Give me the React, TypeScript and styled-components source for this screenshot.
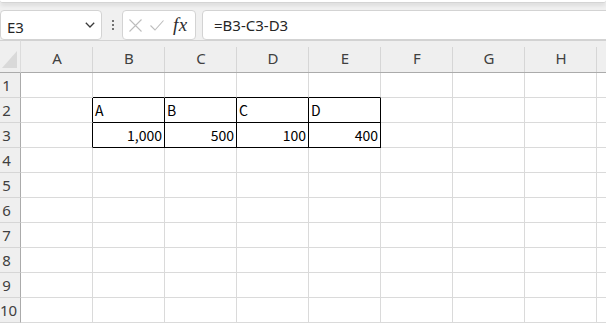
import React from "react";
import styled, { createGlobalStyle } from "styled-components";

const Global = createGlobalStyle`
  html, body { margin: 0; padding: 0; background: #f0f0f0; }
  body { font-family: "Noto Sans", "Noto Sans CJK JP", sans-serif; }
  * { box-sizing: border-box; }
`;

const Window = styled.div`
  width: 606px;
  height: 323px;
  overflow: hidden;
  background: #f0f0f0;
  display: flex;
  flex-direction: column;
`;

const Toolbar = styled.div`
  position: relative;
  height: 40px;
  flex: none;
  display: flex;
  align-items: flex-start;
  padding-top: 10px;
  background: #f0f0f0;
`;

const RibbonEdge = styled.div`
  position: absolute;
  left: 0;
  right: 0;
  top: 0;
  height: 3px;
  background: #ffffff;
  border-bottom: 1px solid #d4d4d4;
  border-radius: 0 0 6px 6px;
  box-shadow: 0 2px 4px rgba(0, 0, 0, 0.12);
`;

const Box = styled.div`
  height: 30px;
  background: #ffffff;
  border: 1px solid #d3d3d3;
  border-radius: 4px;
  display: flex;
  align-items: center;
`;

const NameBox = styled(Box)`
  width: 102px;
  padding: 0 6px 0 6px;
  justify-content: space-between;
`;

const NameText = styled.span`
  font-family: "Noto Sans", sans-serif;
  font-size: 15px;
  color: #262626;
  margin-top: 3px;
`;

const Dots = styled.div`
  width: 20px;
  height: 30px;
  display: flex;
  flex-direction: column;
  align-items: center;
  justify-content: center;
  gap: 2px;
  padding-left: 1px;
`;

const Dot = styled.span`
  width: 2px;
  height: 2px;
  border-radius: 1px;
  background: #4a4a4a;
`;

const ButtonBox = styled(Box)`
  width: 74px;
  padding-left: 5px;
  gap: 0;
`;

const IconSlot = styled.span<{ $w: number }>`
  width: ${(p) => p.$w}px;
  display: flex;
  align-items: center;
  justify-content: center;
`;

const Fx = styled.span`
  font-family: "Liberation Serif", "DejaVu Serif", serif;
  font-style: italic;
  font-size: 19px;
  line-height: 20px;
  color: #2e2e2e;
  letter-spacing: 0.5px;
  margin-left: 1px;
`;

const FormulaBox = styled(Box)`
  flex: 1;
  margin-left: 6px;
  margin-right: -12px;
  padding-left: 11px;
`;

const FormulaText = styled.span`
  font-family: "Noto Sans", sans-serif;
  font-size: 15px;
  color: #262626;
  margin-top: -1px;
`;

const Sheet = styled.div`
  display: grid;
  grid-template-columns: 21px repeat(9, 72px);
  grid-template-rows: 33px repeat(10, 25px);
  background: #ffffff;
`;

const Corner = styled.div`
  background: #efefef;
  border-top: 1px solid #d2d2d2;
  border-bottom: 1px solid #ababab;
  border-right: 1px solid #dcdcdc;
  display: flex;
`;

const ColHeader = styled.div`
  position: relative;
  background: #efefef;
  border-top: 1px solid #d2d2d2;
  border-bottom: 1px solid #ababab;
  display: flex;
  align-items: center;
  justify-content: center;
  font-family: "Noto Sans", sans-serif;
  font-size: 15px;
  color: #404040;
  padding-top: 3px;
  &::after {
    content: "";
    position: absolute;
    right: 0;
    top: 6px;
    bottom: 0;
    width: 1px;
    background: #d6d6d6;
  }
`;

const RowHeader = styled.div`
  background: #efefef;
  border-right: 1px solid #ababab;
  border-bottom: 1px solid #d6d6d6;
  font-family: "Noto Sans", sans-serif;
  font-size: 15px;
  color: #404040;
  line-height: 24px;
  text-align: center;
  padding-right: 7px;
  white-space: nowrap;
`;

const Cell = styled.div<{ $rb: boolean; $bb: boolean; $num: boolean }>`
  border-right: 1px solid ${(p) => (p.$rb ? "#000000" : "#dadada")};
  border-bottom: 1px solid ${(p) => (p.$bb ? "#000000" : "#dadada")};
  font-family: "Noto Sans CJK JP", "Noto Sans", sans-serif;
  font-size: 14px;
  line-height: 24px;
  color: #000000;
  text-align: ${(p) => (p.$num ? "right" : "left")};
  padding: 0 2px 0 2px;
  white-space: nowrap;
  overflow: hidden;
`;

const cols = ["A", "B", "C", "D", "E", "F", "G", "H", "I"];
const visibleLabels = ["A", "B", "C", "D", "E", "F", "G", "H"];
const data: Record<number, Record<string, string>> = {
  2: { B: "A", C: "B", D: "C", E: "D" },
  3: { B: "1,000", C: "500", D: "100", E: "400" },
};
const boxedCols = ["B", "C", "D", "E"];

export default function App() {
  const rows = Array.from({ length: 10 }, (_, i) => i + 1);
  return (
    <Window>
      <Global />
      <Toolbar>
        <RibbonEdge />
        <NameBox>
          <NameText>E3</NameText>
          <svg width="10" height="6" viewBox="0 0 10 6">
            <polyline points="0.8,0.8 5,5 9.2,0.8" fill="none" stroke="#3a3a3a" strokeWidth="1.3" />
          </svg>
        </NameBox>
        <Dots>
          <Dot />
          <Dot />
          <Dot />
        </Dots>
        <ButtonBox>
          <IconSlot $w={14}>
            <svg width="13" height="13" viewBox="0 0 13 13">
              <path d="M0.5 0.5 L12.5 12.5 M12.5 0.5 L0.5 12.5" stroke="#bdbdbd" strokeWidth="1.1" />
            </svg>
          </IconSlot>
          <IconSlot $w={30}>
            <svg width="14" height="11" viewBox="0 0 14 11">
              <polyline points="0.5,5.5 5,10 13.5,0.5" fill="none" stroke="#bdbdbd" strokeWidth="1.1" />
            </svg>
          </IconSlot>
          <Fx>fx</Fx>
        </ButtonBox>
        <FormulaBox>
          <FormulaText>=B3-C3-D3</FormulaText>
        </FormulaBox>
      </Toolbar>
      <Sheet>
        <Corner>
          <svg width="20" height="31" viewBox="0 0 20 31">
            <polygon points="17,10 17,27 2,27" fill="#d9d9d9" />
          </svg>
        </Corner>
        {cols.map((c) => (
          <ColHeader key={c}>{visibleLabels.includes(c) ? c : ""}</ColHeader>
        ))}
        {rows.map((r) => (
          <React.Fragment key={r}>
            <RowHeader>{r}</RowHeader>
            {cols.map((c, ci) => {
              const inBoxRows = r === 2 || r === 3;
              const rb = inBoxRows && ci <= 4;
              const bb = boxedCols.includes(c) && r >= 1 && r <= 3;
              const v = data[r]?.[c] ?? "";
              return (
                <Cell key={c} $rb={rb} $bb={bb} $num={r === 3}>
                  {v}
                </Cell>
              );
            })}
          </React.Fragment>
        ))}
      </Sheet>
    </Window>
  );
}
